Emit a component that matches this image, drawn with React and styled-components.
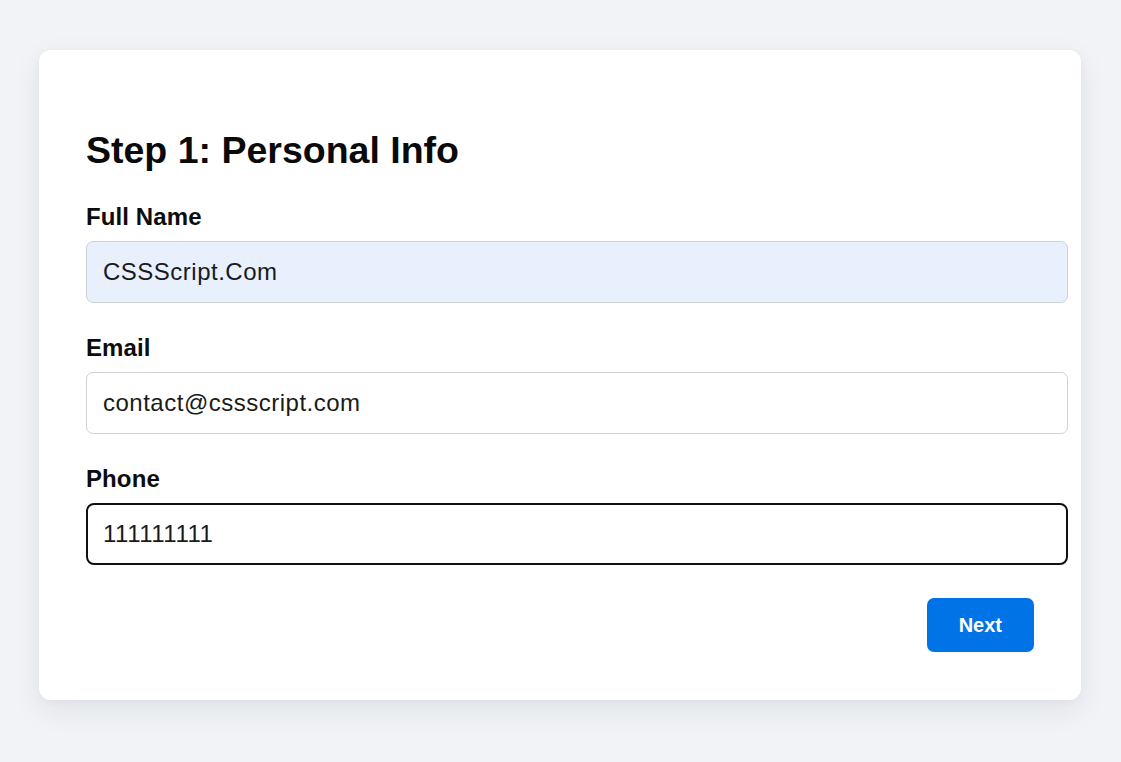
import React from "react";
import styled, { createGlobalStyle } from "styled-components";

const GlobalStyle = createGlobalStyle`
  html, body {
    margin: 0;
    padding: 0;
    background: #f1f3f6;
    font-family: "Liberation Sans", Arial, sans-serif;
  }
  * { box-sizing: content-box; }
`;

const Page = styled.div`
  min-height: 762px;
  padding: 50px 40px 62px 39px;
  box-sizing: border-box;
`;

const Card = styled.div`
  background: #ffffff;
  border-radius: 12px;
  padding: 47px 47px 48px;
  box-shadow: 0 10px 30px rgba(30, 40, 60, 0.08), 0 2px 8px rgba(30, 40, 60, 0.03);
`;

const Title = styled.h2`
  margin: 31px 0 31px;
  font-size: 37.5px;
  line-height: 44px;
  font-weight: 700;
  color: #0a0a0a;
`;

const Form = styled.form`
  display: flex;
  flex-direction: column;
  gap: 31px;
`;

const Field = styled.div`
  display: flex;
  flex-direction: column;
`;

const Label = styled.label`
  display: block;
  font-size: 24px;
  line-height: 28px;
  font-weight: 700;
  letter-spacing: 0.1px;
  color: #0d0d0d;
  margin-bottom: 10px;
`;

const Input = styled.input`
  display: block;
  width: 100%;
  font-family: "Liberation Sans", Arial, sans-serif;
  font-size: 24px;
  line-height: 28px;
  height: 28px;
  letter-spacing: 0.5px;
  color: #1a1a1a;
  padding: ${(p) => (p.$focused ? "15px" : "16px")};
  border: ${(p) => (p.$focused ? "2px solid #111" : "1px solid #cfd2d6")};
  border-radius: ${(p) => (p.$focused ? "8px" : "7px")};
  background: ${(p) => (p.$autofill ? "#e8f0fe" : "#ffffff")};
  outline: none;
  margin: 0;
`;

const Actions = styled.div`
  display: flex;
  justify-content: flex-end;
  margin-top: 2px;
`;

const Button = styled.button`
  height: 54px;
  padding: 0 32px;
  border: none;
  border-radius: 7px;
  background: #0073e6;
  color: #ffffff;
  font-family: "Liberation Sans", Arial, sans-serif;
  font-size: 20px;
  font-weight: 700;
  cursor: pointer;
`;

export default function App() {
  return (
    <>
      <GlobalStyle />
      <Page>
        <Card>
          <Title>Step 1: Personal Info</Title>
          <Form onSubmit={(e) => e.preventDefault()}>
            <Field>
              <Label htmlFor="name">Full Name</Label>
              <Input id="name" $autofill defaultValue="CSSScript.Com" />
            </Field>
            <Field>
              <Label htmlFor="email">Email</Label>
              <Input id="email" defaultValue="contact@cssscript.com" />
            </Field>
            <Field>
              <Label htmlFor="phone">Phone</Label>
              <Input id="phone" $focused defaultValue="111111111" />
            </Field>
            <Actions>
              <Button type="submit">Next</Button>
            </Actions>
          </Form>
        </Card>
      </Page>
    </>
  );
}
